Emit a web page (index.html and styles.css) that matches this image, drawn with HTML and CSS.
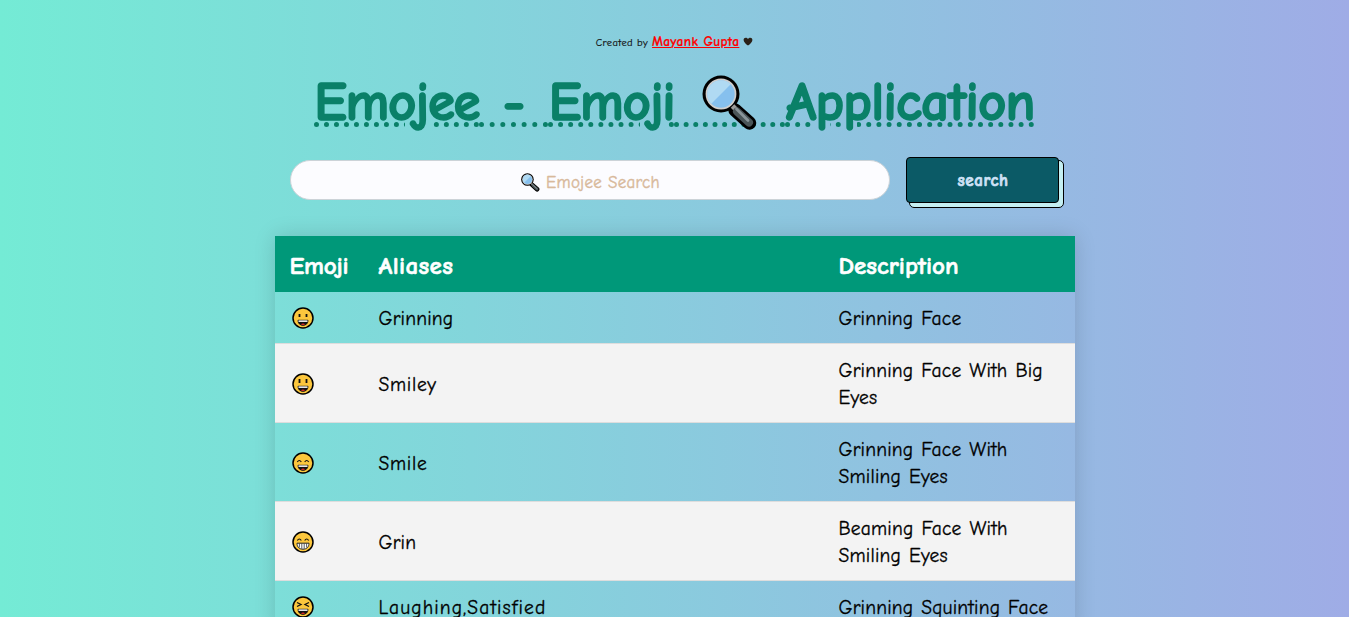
FILE: index.html
```html
<!DOCTYPE html>
<html lang="en">
<head>
<meta charset="utf-8">
<title>Emojee - Emoji Search Application</title>
<link rel="stylesheet" href="styles.css">
</head>
<body>
<svg class="defs" aria-hidden="true">
  <defs>
    <symbol id="lens" viewBox="0 0 56 56">
      <path d="M33 35 47.500 48" stroke="#000" stroke-width="13.500" stroke-linecap="round"/>
      <circle cx="19" cy="19" r="18.500" fill="#000"/>
      <circle cx="19" cy="19" r="15.400" fill="#d0cfce"/>
      <circle cx="19" cy="19" r="13.700" fill="#86c0ee"/>
      <path d="M9.300 28.700A13.700 13.700 0 0 1 28.700 9.300Z" fill="#b0daf3"/>
      <path d="m30.500 31 4 4" stroke="#9b9b9a" stroke-width="5"/>
      <path d="M35 36.500 47 47.500" stroke="#4a5558" stroke-width="8" stroke-linecap="round"/>
      <path d="M34.500 34 46 45.500" stroke="#899599" stroke-width="2.800" stroke-linecap="round"/>
    </symbol>
    <symbol id="face" viewBox="0 0 22 22">
      <circle cx="11" cy="11" r="10" fill="#fcc73d" stroke="#000" stroke-width="1.500"/>
    </symbol>
    <symbol id="mouth" viewBox="0 0 22 22">
      <path d="M6 13.300h10c0 3-2 5-5 5s-5-2-5-5Z" fill="#111" stroke="#111"/>
      <path d="M6.500 13.400h9v1.500h-9Z" fill="#fff"/>
      <path d="M8.800 17.300Q11 15.500 13.200 17.300 11 18.600 8.800 17.300Z" fill="#ea2a2a"/>
    </symbol>
  </defs>
</svg>

<p class="credit"><span class="credit-by">Created by</span> <a class="credit-name">Mayank Gupta</a>
  <svg class="heart" viewBox="0 0 10 9"><path d="M5 8.500C3 7 .6 5 .6 2.900.6.300 3.800 0 5 2.100 6.200 0 9.400.300 9.400 2.900 9.400 5 7 7 5 8.500Z" fill="#2a2017"/></svg>
</p>

<h1 class="title"><span class="w1">Emojee</span> - <span class="w2">Emoji</span><span class="lens-slot">&nbsp;<svg class="title-lens"><use href="#lens"/></svg></span><span class="w3">Application</span></h1>

<div class="search">
  <div class="field"><svg class="field-lens"><use href="#lens"/></svg><span>Emojee Search</span></div>
  <button class="btn"><span>search</span></button>
</div>

<table class="list">
  <thead><tr><th class="c1">Emoji</th><th class="c2">Aliases</th><th class="c3">Description</th></tr></thead>
  <tbody>
    <tr><td><svg class="emoji" viewBox="0 0 22 22"><use href="#face"/><use href="#mouth"/><path d="M7.500 7v3M14.500 7v3" stroke="#111" stroke-width="1.800"/></svg></td><td>Grinning</td><td>Grinning Face</td></tr>
    <tr><td><svg class="emoji" viewBox="0 0 22 22"><use href="#face"/><use href="#mouth"/><path d="M7.500 6v4M14.500 6v4" stroke="#111" stroke-width="1.800"/></svg></td><td class="mid">Smiley</td><td>Grinning Face With Big Eyes</td></tr>
    <tr><td><svg class="emoji" viewBox="0 0 22 22"><use href="#face"/><use href="#mouth"/><path d="M5.300 10Q7.300 7 9.300 10M12.700 10Q14.700 7 16.700 10" fill="none" stroke="#111" stroke-width="1.200"/></svg></td><td class="mid">Smile</td><td>Grinning Face With Smiling Eyes</td></tr>
    <tr><td><svg class="emoji" viewBox="0 0 22 22"><use href="#face"/><path d="M5.300 9.500Q7.300 6.500 9.300 9.500M12.700 9.500Q14.700 6.500 16.700 9.500" fill="none" stroke="#111" stroke-width="1.200"/><path d="M5 12.200h12c0 3.500-2 6-6 6s-6-2.500-6-6Z" fill="#fff" stroke="#222"/><path d="M7.400 12.500v4M9.800 12.500v5.300M12.200 12.500v5.300M14.600 12.500v4" stroke="#333" stroke-width=".8"/></svg></td><td>Grin</td><td>Beaming Face With Smiling Eyes</td></tr>
    <tr><td><svg class="emoji" viewBox="0 0 22 22"><use href="#face"/><use href="#mouth"/><path d="m5 6.500 4 2-4 2M17 6.500l-4 2 4 2" fill="none" stroke="#111" stroke-width="1.300"/></svg></td><td class="wide">Laughing,Satisfied</td><td>Grinning Squinting Face</td></tr>
  </tbody>
</table>
</body>
</html>
```
FILE: styles.css
```css
* { box-sizing: border-box; }
html { height: 100%; overflow: hidden; }
body {
  margin: 0;
  height: 617px;
  overflow: hidden;
  display: flex;
  flex-direction: column;
  align-items: center;
  background: linear-gradient(to right, #74ebd5, #9face6);
  font-family: "Comic Sans MS", "Comic Neue", Lato, sans-serif;
  font-variant-ligatures: none;
}
.defs { position: absolute; width: 0; height: 0; }

.credit {
  margin: 32px 0 0;
  height: 20px;
  line-height: 20px;
  display: flex;
  align-items: baseline;
  gap: 4px;
  font-size: 10.5px;
  color: #111;
  -webkit-text-stroke: .2px;
}
.credit-by { letter-spacing: .4px; }
.credit-name {
  font-size: 13.5px;
  font-weight: 700;
  letter-spacing: .3px;
  color: #f00;
  text-decoration: underline 1px;
}
.heart { width: 10px; height: 9px; }

.title {
  margin: 18px 0 0;
  height: 65px;
  line-height: 65px;
  white-space: nowrap;
  font-size: 55px;
  font-weight: 700;
  color: #0a8068;
  word-spacing: 4px;
  -webkit-text-stroke: 1.5px #0a8068;
  text-decoration: underline dotted 5px;
  text-underline-offset: 2px;
}
.w1 { letter-spacing: -1.4px; }
.w2 { letter-spacing: -1.4px; }
.w3 { letter-spacing: -.8px; }
.lens-slot { position: relative; word-spacing: 92px; }
.title-lens { position: absolute; left: 28px; top: 5px; width: 56px; height: 56px; }

.search { margin-top: 22px; width: 770px; display: flex; gap: 16px; }
.field {
  width: 600px;
  height: 40px;
  margin-top: 3px;
  display: flex;
  align-items: center;
  justify-content: center;
  gap: 6px;
  padding-top: 4px;
  padding-left: 2px;
  border: 1px solid #ccd3d8;
  border-radius: 20px;
  background: #fcfcff;
  color: #d8b99b;
  font-size: 17px;
  letter-spacing: .3px;
  -webkit-text-stroke: .4px;
}
.field-lens { width: 19px; height: 19px; }
.btn {
  position: relative;
  width: 153px;
  height: 46px;
  padding: 0;
  border: 0;
  background: none;
  font: 700 17px "Comic Sans MS", "Comic Neue", Lato, sans-serif;
  letter-spacing: .6px;
  color: #cfe2f6;
  -webkit-text-stroke: .7px;
}
.btn::before {
  content: "";
  position: absolute;
  left: 3px;
  top: 3px;
  width: 153px;
  height: 46px;
  border: 1px solid #000;
  border-radius: 5px;
  background: #c4eff2;
}
.btn span {
  position: relative;
  display: flex;
  align-items: center;
  justify-content: center;
  height: 46px;
  padding-left: 2px;
  border: 1px solid #000;
  border-radius: 4px;
  background: #0b5a66;
}

.list {
  width: 800px;
  margin-top: 33px;
  table-layout: fixed;
  border-collapse: collapse;
  box-shadow: 0 0 20px rgba(0, 0, 0, .15);
  font-size: 19.5px;
  line-height: 27px;
  letter-spacing: .2px;
  word-spacing: 1.2px;
  color: #000;
  -webkit-text-stroke: .3px;
}
.list th, .list td { padding: 13px 14px 11px 16px; text-align: left; vertical-align: middle; }
.list thead tr { height: 56px; background: #009879; color: #fff; font-size: 25px; -webkit-text-stroke: .6px; }
.list tbody tr { border-bottom: 1px solid #ddd; }
.list tbody tr:nth-child(even) { background: #f3f3f3; }
.list .c1 { width: 88px; padding-left: 15px; letter-spacing: -.3px; }
.c2 { width: 460px; letter-spacing: .4px; }
.c3 { width: 252px; letter-spacing: 0; }
.mid { letter-spacing: .7px; }
.wide { letter-spacing: 1.1px; }
.emoji { display: block; width: 22px; height: 22px; margin: -1px 0 0 1px; }
```
